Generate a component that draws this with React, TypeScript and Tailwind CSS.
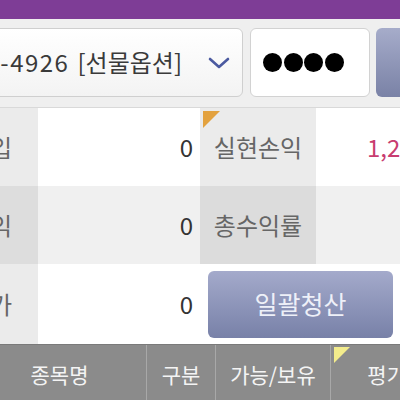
import React from "react";

const font = { fontFamily: '"Noto Sans CJK KR", "Noto Sans", sans-serif' };

export default function App() {
  return (
    <div
      className="w-[400px] h-[400px] overflow-hidden bg-[#efefef] flex flex-col"
      style={font}
    >
      {/* top purple bar */}
      <div className="h-[19px] bg-[#7e3d96] shrink-0" />

      {/* controls row */}
      <div className="h-[88px] shrink-0 flex items-center gap-[7px] pb-[2px]">
        <div className="ml-[-40px] w-[283px] h-[69px] shrink-0 rounded-[6px] border border-[#cfcfcf] bg-gradient-to-b from-white to-[#f3f3f3] flex items-center justify-end pr-[12px]">
          <span className="text-[24px] text-[#3a3a3a] whitespace-nowrap leading-none flex items-center">
            <span className="tracking-[1.5px]">0-4926</span>
            <span className="ml-[8px]">[선물옵션]</span>
          </span>
          <svg
            className="ml-[26px] mt-[2px]"
            width="22"
            height="12"
            viewBox="0 0 22 12"
            fill="none"
          >
            <path
              d="M2 2 L11 10 L20 2"
              stroke="#4b5aa0"
              strokeWidth="2.6"
              strokeLinecap="round"
              strokeLinejoin="round"
            />
          </svg>
        </div>
        <div className="w-[120px] h-[69px] shrink-0 rounded-[6px] border border-[#d2d2d2] bg-white flex items-center pl-[12px] gap-[1.5px]">
          <div className="w-[19px] h-[19px] rounded-full bg-black" />
          <div className="w-[19px] h-[19px] rounded-full bg-black" />
          <div className="w-[19px] h-[19px] rounded-full bg-black" />
          <div className="w-[19px] h-[19px] rounded-full bg-black" />
        </div>
        <div className="ml-[-1px] w-[80px] h-[69px] shrink-0 rounded-[6px] bg-gradient-to-b from-[#a6acca] to-[#7a82a6]" />
      </div>

      {/* table */}
      <div className="shrink-0 border-t border-[#d9d9d9] flex flex-col text-[24px]">
        {/* row 1 */}
        <div className="h-[78px] flex">
          <div className="ml-[-78px] w-[116px] shrink-0 bg-[#ebebeb] flex items-center justify-end pr-[26px] text-[#666] whitespace-nowrap">
            총매입
          </div>
          <div className="w-[162px] shrink-0 bg-white flex items-center justify-end pr-[7px] text-[#333]">
            0
          </div>
          <div className="relative w-[116px] shrink-0 bg-[#ebebeb] flex items-center justify-center text-[#666]">
            <div className="absolute left-[3px] top-[3px] w-0 h-0 border-t-[17px] border-t-[#e3a23f] border-r-[17px] border-r-transparent" />
            실현손익
          </div>
          <div className="w-[120px] shrink-0 bg-white flex items-center pl-[51px] text-[#c83c70] whitespace-nowrap">
            1,200,000
          </div>
        </div>
        {/* row 2 */}
        <div className="h-[78px] flex">
          <div className="ml-[-78px] w-[116px] shrink-0 bg-[#dddddd] flex items-center justify-end pr-[26px] text-[#666] whitespace-nowrap">
            평가손익
          </div>
          <div className="w-[162px] shrink-0 bg-[#f0f0f0] flex items-center justify-end pr-[7px] text-[#333]">
            0
          </div>
          <div className="w-[116px] shrink-0 bg-[#dcdcdc] flex items-center justify-center text-[#666]">
            총수익률
          </div>
          <div className="w-[120px] shrink-0 bg-[#f0f0f0]" />
        </div>
        {/* row 3 */}
        <div className="h-[80px] flex">
          <div className="ml-[-78px] w-[116px] shrink-0 bg-[#ebebeb] flex items-center justify-end pr-[26px] text-[#666] whitespace-nowrap">
            평균가
          </div>
          <div className="w-[162px] shrink-0 bg-white flex items-center justify-end pr-[7px] text-[#333]">
            0
          </div>
          <div className="w-[236px] shrink-0 bg-white flex items-center pl-[8px]">
            <div className="w-[185px] h-[67px] rounded-[6px] bg-gradient-to-b from-[#a4aacb] to-[#7881a8] flex items-center justify-center text-[25px] text-[#eef0f8]">
              일괄청산
            </div>
          </div>
        </div>
      </div>

      {/* header */}
      <div className="h-[60px] shrink-0 bg-[#8b8b8b] border-t border-[#7a7a7a] flex text-[21px] text-[#f4f4f4]">
        <div className="ml-[-27px] w-[174px] shrink-0 flex items-center justify-center border-r border-[#a8a8a8]">
          종목명
        </div>
        <div className="w-[69px] shrink-0 flex items-center justify-center border-r border-[#a8a8a8]">
          구분
        </div>
        <div className="w-[115px] shrink-0 flex items-center justify-center border-r border-[#a8a8a8]">
          가능/보유
        </div>
        <div className="relative w-[150px] shrink-0 flex items-center justify-center whitespace-nowrap">
          <div className="absolute left-[3px] top-[2px] w-0 h-0 border-t-[16px] border-t-[#f3ec8c] border-r-[16px] border-r-transparent" />
          평가손익
        </div>
      </div>
    </div>
  );
}
